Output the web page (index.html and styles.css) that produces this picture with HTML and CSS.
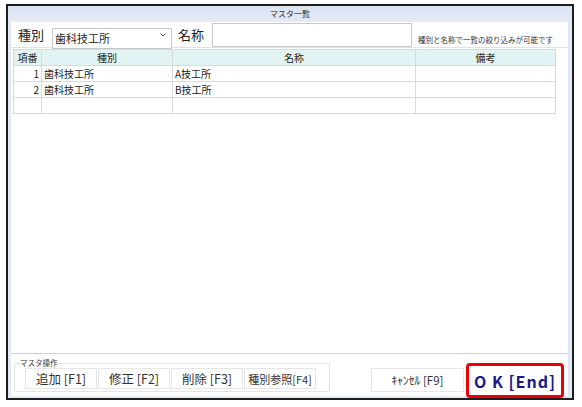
FILE: index.html
```html
<!DOCTYPE html>
<html lang="ja">
<head>
  <meta charset="UTF-8">
  <title>マスタ一覧</title>
  <link rel="stylesheet" href="styles.css">
</head>
<body>
  <div class="window">
    <div class="titlebar">マスタ一覧</div>

    <div class="main">
      <div class="search">
        <label class="lbl">種別</label>
        <div class="select-wrap">
          <select class="kind">
            <option>歯科技工所</option>
          </select>
          <svg class="chev" width="6" height="4" viewBox="0 0 6 4"><path d="M0.5 0.5 L3 3 L5.5 0.5" fill="none" stroke="#555" stroke-width="1"/></svg>
        </div>
        <label class="lbl lbl-name">名称</label>
        <input type="text" class="name">
        <span class="hint">種別と名称で一覧の絞り込みが可能です</span>
      </div>

      <div class="list">
        <table class="grid">
          <colgroup>
            <col class="c-no"><col class="c-kind"><col class="c-name"><col class="c-note">
          </colgroup>
          <thead>
            <tr><th>項番</th><th>種別</th><th>名称</th><th>備考</th></tr>
          </thead>
          <tbody>
            <tr><td class="num">1</td><td>歯科技工所</td><td>A技工所</td><td></td></tr>
            <tr><td class="num">2</td><td>歯科技工所</td><td>B技工所</td><td></td></tr>
            <tr><td></td><td></td><td></td><td></td></tr>
          </tbody>
        </table>
      </div>

      <div class="footer">
        <fieldset class="ops">
          <legend>マスタ操作</legend>
          <button class="btn">追加 [F1]</button>
          <button class="btn">修正 [F2]</button>
          <button class="btn">削除 [F3]</button>
          <button class="btn btn-small">種別参照[F4]</button>
        </fieldset>
        <button class="btn btn-cancel">ｷｬﾝｾﾙ [F9]</button>
        <button class="btn btn-ok">O K [End]</button>
      </div>
    </div>
  </div>
</body>
</html>
```

FILE: styles.css
```css
body {
  margin: 0;
  background: #fff;
  font-family: "Noto Sans CJK JP", "Noto Sans", sans-serif;
  color: #222;
}

.window {
  margin: 4px 0 0 6px;
  width: 568px;
  height: 396px;
  box-sizing: border-box;
  border: 2px solid #1e1e1e;
  background: #e3e9f2;
  display: flex;
  flex-direction: column;
}

.titlebar {
  height: 16px;
  line-height: 16px;
  text-align: center;
  font-size: 8px;
  color: #333;
  background: linear-gradient(#d9e3f0, #e4ebf5);
}

.main {
  flex: 1;
  margin: 0 4px 2px 3px;
  background: #fff;
  display: flex;
  flex-direction: column;
}

/* search bar */
.search {
  height: 25px;
  display: flex;
  align-items: flex-start;
  border-bottom: 1px solid #e2e2e2;
}
.lbl {
  font-size: 13px;
  line-height: 25px;
  margin-left: 7px;
  width: 34px;
}
.lbl-name { margin-left: 6px; width: 34px; }
.select-wrap {
  position: relative;
  margin-top: 2px;
}
.kind {
  appearance: none;
  width: 120px;
  height: 21px;
  border: 1px solid #c8c8c8;
  background: #fff;
  font-family: inherit;
  font-size: 11px;
  padding: 0 0 0 2px;
  color: #222;
}
.chev { position: absolute; right: 6px; top: 9px; }
.name {
  width: 200px;
  height: 24px;
  box-sizing: border-box;
  margin-top: 1px;
  border: 1px solid #c8c8c8;
  outline: none;
}
.hint {
  font-size: 7.5px;
  line-height: 10px;
  margin: 13px 0 0 6px;
  color: #333;
}

/* list */
.list {
  flex: 1;
  padding: 1px 0 0 2px;
  border-bottom: 1px solid #d0d0d0;
}
.grid {
  border-collapse: collapse;
  width: 542px;
  table-layout: fixed;
  font-size: 10px;
}
.c-no { width: 28px; }
.c-kind { width: 131px; }
.c-name { width: 243px; }
.c-note { width: 140px; }
.grid th, .grid td {
  height: 15px;
  border: 1px solid #dadada;
  padding: 0 2px;
  line-height: 14px;
  white-space: nowrap;
}
.grid th {
  background: #e2f3f3;
  font-weight: normal;
}
.grid td.num { text-align: right; }

/* bottom buttons */
.footer {
  height: 42px;
  display: flex;
  align-items: flex-start;
}
.ops {
  margin: 5px 0 0 3px;
  padding: 1px 0 0 10px;
  width: 316px;
  height: 33px;
  box-sizing: border-box;
  border: 1px solid #e4e4e4;
  display: flex;
  gap: 1px;
  align-items: flex-start;
}
.ops legend {
  font-size: 7.5px;
  line-height: 8px;
  padding: 0;
  margin-left: -5px;
  color: #333;
}
.btn {
  width: 72px;
  height: 21px;
  padding: 0;
  border: 1px solid #e6e6e6;
  background: #fff;
  font-family: inherit;
  font-size: 12.5px;
  color: #333;
}
.btn-small { font-size: 11px; }
.btn-cancel {
  width: 93px;
  height: 24px;
  margin: 14px 0 0 auto;
  font-size: 11.5px;
}
.btn-ok {
  width: 98px;
  height: 35px;
  margin: 9px 4px 0 2px;
  border: 3px solid #e8000b;
  border-radius: 4px;
  font-size: 16px;
  font-weight: bold;
  color: #19198a;
  letter-spacing: 1px;
}
```
